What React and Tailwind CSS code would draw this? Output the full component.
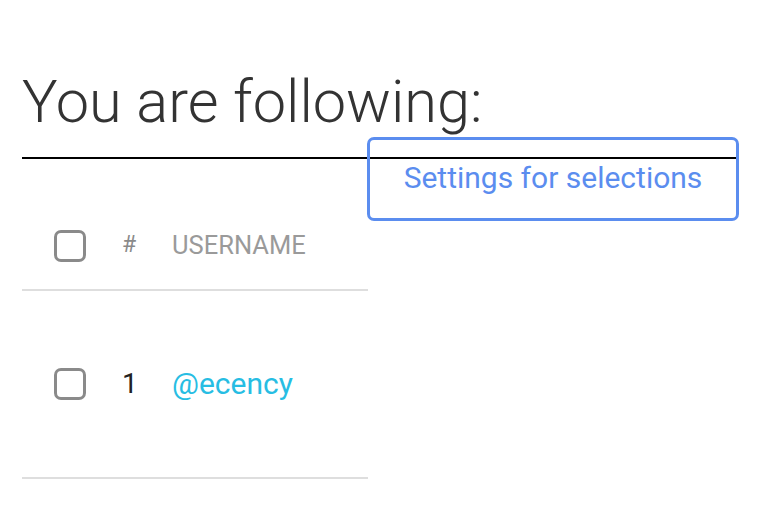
export default function App() {
  const rows = [{ id: 1, name: '@ecency' }];

  return (
    <div className="min-h-screen bg-white font-['Roboto',sans-serif] px-[22px] pt-[66px]">
      <div className="w-[716px]">
        <h1 className="text-[59.5px] leading-[72px] font-light text-[#333] pb-[19px] border-b-2 border-black">
          You are following:
        </h1>
        <div className="flex justify-end -mt-[22px] mr-[-1px]">
          <button className="w-[372px] h-[84px] pb-[4px] border-[3px] border-[#5b8def] rounded-[7px] bg-transparent text-[30px] text-[#5b8def] flex items-center justify-center">
            Settings for selections
          </button>
        </div>
      </div>

      <div className="w-[346px]">
        <div className="flex items-center h-[70px] pb-[19px] border-b-2 border-[#dedede]">
          <div className="w-[100px] pl-[32px]">
            <span className="block w-[32px] h-[32px] border-[3px] border-[#8a8a8a] rounded-[7px]" />
          </div>
          <div className="w-[50px] text-[23px] text-[#8a8a8a]">#</div>
          <div className="text-[25.5px] text-[#9a9a9a]">USERNAME</div>
        </div>
        {rows.map((row) => (
          <div key={row.id} className="flex items-center h-[188px] border-b-2 border-[#dedede]">
            <div className="w-[100px] pl-[32px]">
              <span className="block w-[32px] h-[32px] border-[3px] border-[#8a8a8a] rounded-[7px]" />
            </div>
            <div className="w-[50px] text-[28px] text-[#222]">{row.id}</div>
            <a className="text-[30px] text-[#27bde3] pb-[2px]">{row.name}</a>
          </div>
        ))}
      </div>
    </div>
  );
}
